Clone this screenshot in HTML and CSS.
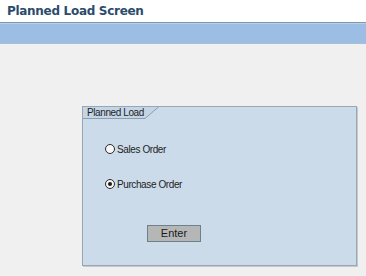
FILE: index.html
```html
<!DOCTYPE html>
<html>
<head>
<meta charset="utf-8">
<link rel="stylesheet" href="styles.css">
</head>
<body>
<header class="header"><h1 class="title">Planned Load Screen</h1></header>
<div class="bar"></div>
<main class="content">
  <section class="panel">
    <div class="tab">
      <span class="tab-label">Planned Load</span>
      <svg class="tab-slant" width="14" height="12" viewBox="0 0 14 12"><polygon points="0,0 14,0 0,12" fill="#c3d5e7"/><line x1="0" y1="11.5" x2="14" y2="-0.5" stroke="#8e9dab" stroke-width="1"/></svg>
    </div>
    <div class="options">
      <label class="option"><span class="radio"></span>Sales Order</label>
      <label class="option"><span class="radio checked"></span>Purchase Order</label>
    </div>
    <div class="actions"><button class="enter">Enter</button></div>
  </section>
</main>
</body>
</html>
```
FILE: styles.css
```css
html, body {
  margin: 0;
  padding: 0;
}
body {
  background: #f0f0f0;
  font-family: "Liberation Sans", Arial, sans-serif;
  width: 366px;
  height: 276px;
  overflow: hidden;
}
.header {
  background: #ffffff;
  height: 22px;
  border-bottom: 1px solid #7f97a8;
  display: flex;
  align-items: center;
}
.title {
  margin: 0 0 0 7px;
  font-family: "DejaVu Sans", Verdana, sans-serif;
  font-weight: bold;
  font-size: 12px;
  color: #2b4b6c;
  letter-spacing: -0.3px;
}
.bar {
  height: 19px;
  background: #9dbee4;
  border-top: 1px solid #b8d0ec;
  border-bottom: 1px solid #a8c0d4;
}
.content {
  padding: 62px 0 0 82px;
}
.panel {
  width: 273px;
  height: 158px;
  background: #cbdbea;
  border: 1px solid #9aa7b3;
  box-shadow: 1px 1px 0 #c4c9ce;
  display: flex;
  flex-direction: column;
}
.tab {
  display: flex;
  height: 12px;
}
.tab-label {
  background: #c3d5e7;
  border-bottom: 1px solid #8e9dab;
  height: 11px;
  padding: 0 1px 0 4px;
  font-size: 10px;
  letter-spacing: -0.4px;
  line-height: 11px;
  color: #1e1e1e;
}
.tab-slant {
  display: block;
}
.options {
  display: flex;
  flex-direction: column;
  gap: 23px;
  padding: 24px 0 0 22px;
}
.option {
  display: flex;
  align-items: center;
  gap: 2px;
  height: 12px;
  font-size: 10px;
  letter-spacing: -0.4px;
  color: #1e1e1e;
}
.radio {
  width: 8px;
  height: 8px;
  border: 1px solid #2a2a2a;
  border-radius: 50%;
  background: #f4f6f8;
  display: flex;
  align-items: center;
  justify-content: center;
}
.radio.checked::after {
  content: "";
  width: 4px;
  height: 4px;
  border-radius: 50%;
  background: #1a1a1a;
}
.actions {
  padding: 33px 0 0 64px;
}
.enter {
  width: 54px;
  height: 17px;
  padding: 0;
  background: #b5b7b7;
  border: 1px solid #6f808c;
  font-family: "Liberation Sans", Arial, sans-serif;
  font-size: 11px;
  color: #1a1a1a;
}
```
